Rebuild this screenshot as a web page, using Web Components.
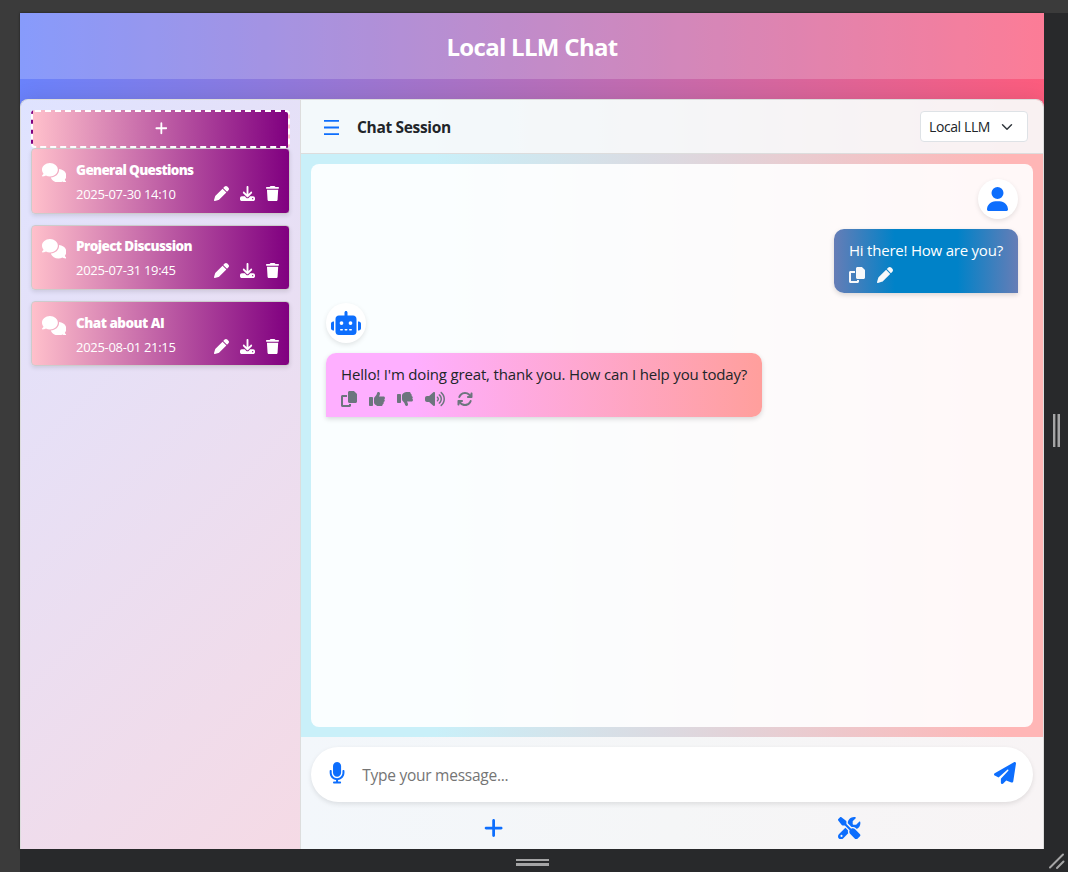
<!DOCTYPE html>
<html lang="en">
<head>
<meta charset="utf-8">
<title>Local LLM Chat</title>
<style>
html,body{margin:0;height:100%;overflow:hidden}
body{background:#3b3b3b;font-family:"Open Sans","Noto Sans",sans-serif;color:#212529}
</style>
</head>
<body>
<device-frame>
  <chat-app>
    <chat-sidebar slot="side">
      <session-card date="2025-07-30 14:10" track="-.67px">General Questions</session-card>
      <session-card date="2025-07-31 19:45" track="-.61px">Project Discussion</session-card>
      <session-card date="2025-08-01 21:15" track="-.52px">Chat about AI</session-card>
    </chat-sidebar>
    <chat-panel slot="main">
      <chat-message who="user" actions="copy pen">Hi there! How are you?</chat-message>
      <chat-message who="bot" actions="copy up down volume sync">Hello! I'm doing great, thank you. How can I help you today?</chat-message>
    </chat-panel>
  </chat-app>
</device-frame>
<script>
const ICONS={
comments:[640,"M208 352c114.9 0 208-78.8 208-176S322.9 0 208 0S0 78.8 0 176c0 38.6 14.7 74.3 39.6 103.4c-3.5 9.4-8.7 17.7-14.2 24.7c-4.8 6.2-9.7 11-13.3 14.3c-1.8 1.6-3.3 2.9-4.3 3.7c-.5 .4-.9 .7-1.1 .8l-.2 .2C1 327.2-1.4 334.4 .8 340.9S9.1 352 16 352c21.8 0 43.8-5.6 62.1-12.5c9.2-3.5 17.8-7.4 25.2-11.4C134.1 343.3 169.8 352 208 352zM448 176c0 112.3-99.1 196.9-216.5 207C255.8 457.4 336.4 512 432 512c38.2 0 73.9-8.7 104.7-23.9c7.5 4 16 7.9 25.2 11.4c18.3 6.9 40.3 12.5 62.1 12.5c6.9 0 13.1-4.5 15.2-11.1c2.1-6.6-.2-13.8-5.8-17.9l-.2-.2c-.2-.2-.6-.4-1.1-.8c-1-.8-2.5-2-4.3-3.7c-3.6-3.3-8.5-8.1-13.3-14.3c-5.5-7-10.7-15.4-14.2-24.7c24.9-29 39.6-64.7 39.6-103.4c0-92.8-84.9-168.9-192.6-175.5c.4 5.1 .6 10.3 .6 15.5z"],
pen:[512,"M362.7 19.3L314.3 67.7 444.3 197.7l48.4-48.4c25-25 25-65.5 0-90.5L453.3 19.3c-25-25-65.5-25-90.5 0zm-71 71L58.6 323.5c-10.4 10.4-18 23.3-22.2 37.4L1 481.2C-1.5 489.7 .8 498.8 7 505s15.3 8.5 23.7 6.1l120.3-35.4c14.1-4.2 27-11.8 37.4-22.2L421.7 220.3 291.7 90.3z"],
download:[512,"M288 32c0-17.7-14.3-32-32-32s-32 14.3-32 32V274.7l-73.4-73.4c-12.5-12.5-32.8-12.5-45.3 0s-12.5 32.8 0 45.3l128 128c12.5 12.5 32.8 12.5 45.3 0l128-128c12.5-12.5 12.5-32.8 0-45.3s-32.8-12.5-45.3 0L288 274.7V32zM64 352c-35.3 0-64 28.7-64 64v32c0 35.3 28.7 64 64 64H448c35.3 0 64-28.7 64-64V416c0-35.3-28.7-64-64-64H346.5l-45.3 45.3c-25 25-65.5 25-90.5 0L165.5 352H64zm368 56a24 24 0 1 1 0 48 24 24 0 1 1 0-48z"],
trash:[448,"M135.2 17.7L128 32H32C14.3 32 0 46.3 0 64S14.3 96 32 96H416c17.7 0 32-14.3 32-32s-14.3-32-32-32H320l-7.2-14.3C307.4 6.8 296.3 0 284.2 0H163.8c-12.1 0-23.2 6.8-28.6 17.7zM416 128H32L53.2 467c1.6 25.3 22.6 45 47.9 45H346.9c25.3 0 46.3-19.7 47.9-45L416 128z"],
plus:[448,"M256 80c0-17.7-14.3-32-32-32s-32 14.3-32 32V224H48c-17.7 0-32 14.3-32 32s14.3 32 32 32H192V432c0 17.7 14.3 32 32 32s32-14.3 32-32V288H400c17.7 0 32-14.3 32-32s-14.3-32-32-32H256V80z"],
user:[448,"M224 256A128 128 0 1 0 224 0a128 128 0 1 0 0 256zm-45.7 48C79.8 304 0 383.8 0 482.3C0 498.7 13.3 512 29.7 512H418.3c16.4 0 29.7-13.3 29.7-29.7C448 383.8 368.2 304 269.7 304H178.3z"],
robot:[640,"M320 0c17.7 0 32 14.3 32 32V96H472c39.8 0 72 32.2 72 72V440c0 39.8-32.2 72-72 72H168c-39.8 0-72-32.2-72-72V168c0-39.8 32.2-72 72-72H288V32c0-17.7 14.3-32 32-32zM208 384c-8.8 0-16 7.2-16 16s7.2 16 16 16h32c8.8 0 16-7.2 16-16s-7.2-16-16-16H208zm96 0c-8.8 0-16 7.2-16 16s7.2 16 16 16h32c8.8 0 16-7.2 16-16s-7.2-16-16-16H304zm96 0c-8.8 0-16 7.2-16 16s7.2 16 16 16h32c8.8 0 16-7.2 16-16s-7.2-16-16-16H400zM264 256a40 40 0 1 0 -80 0 40 40 0 1 0 80 0zm152 40a40 40 0 1 0 0-80 40 40 0 1 0 0 80zM48 224H64V416H48c-26.5 0-48-21.5-48-48V272c0-26.5 21.5-48 48-48zm544 0c26.5 0 48 21.5 48 48v96c0 26.5-21.5 48-48 48H576V224h16z"],
copy:[512,"M272 0H396.1c12.7 0 24.9 5.1 33.9 14.1l67.9 67.9c9 9 14.1 21.2 14.1 33.9V336c0 26.5-21.5 48-48 48H272c-26.5 0-48-21.5-48-48V48c0-26.5 21.5-48 48-48zM48 128H192v64H64V448H256V416h64v48c0 26.5-21.5 48-48 48H48c-26.5 0-48-21.5-48-48V176c0-26.5 21.5-48 48-48z"],
up:[512,"M313.4 32.9c26 5.2 42.9 30.5 37.7 56.5l-2.3 11.4c-5.3 26.7-15.1 52.1-28.8 75.2H464c26.5 0 48 21.5 48 48c0 18.5-10.5 34.6-25.9 42.6C497 275.4 504 288.9 504 304c0 23.4-16.8 42.9-38.9 47.1c4.4 7.3 6.9 15.8 6.9 24.9c0 21.3-13.9 39.4-33.1 45.6c.7 3.3 1.1 6.8 1.1 10.4c0 26.5-21.5 48-48 48H294.5c-19 0-37.5-5.6-53.3-16.1l-38.5-25.7C176 420.4 160 390.4 160 358.3V320 272 247.1c0-29.2 13.3-56.7 36-75l7.4-5.9c26.5-21.2 44.6-51 51.2-84.2l2.3-11.4c5.2-26 30.5-42.9 56.5-37.7zM32 192H96c17.7 0 32 14.3 32 32V448c0 17.7-14.3 32-32 32H32c-17.7 0-32-14.3-32-32V224c0-17.7 14.3-32 32-32z"],
down:[512,"M313.4 479.1c26-5.2 42.9-30.5 37.7-56.5l-2.3-11.4c-5.3-26.7-15.1-52.1-28.8-75.2H464c26.5 0 48-21.5 48-48c0-18.5-10.5-34.6-25.9-42.6C497 236.6 504 223.1 504 208c0-23.4-16.8-42.9-38.9-47.1c4.4-7.3 6.9-15.8 6.9-24.9c0-21.3-13.9-39.4-33.1-45.6c.7-3.3 1.1-6.8 1.1-10.4c0-26.5-21.5-48-48-48H294.5c-19 0-37.5 5.6-53.3 16.1L202.7 73.8C176 91.6 160 121.6 160 153.7V192v48 24.9c0 29.2 13.3 56.7 36 75l7.4 5.9c26.5 21.2 44.6 51 51.2 84.2l2.3 11.4c5.2 26 30.5 42.9 56.5 37.7zM32 384H96c17.7 0 32-14.3 32-32V128c0-17.7-14.3-32-32-32H32C14.3 96 0 110.3 0 128V352c0 17.7 14.3 32 32 32z"],
volume:[640,"M533.6 32.5C598.5 85.2 640 165.8 640 256s-41.5 170.7-106.4 223.5c-10.3 8.4-25.4 6.8-33.8-3.5s-6.8-25.4 3.5-33.8C557.5 398.2 592 331.2 592 256s-34.5-142.2-88.7-186.3c-10.3-8.4-11.8-23.5-3.5-33.8s23.5-11.8 33.8-3.5zM473.1 107c43.2 35.2 70.9 88.9 70.9 149s-27.7 113.8-70.9 149c-10.3 8.4-25.4 6.8-33.8-3.5s-6.8-25.4 3.5-33.8C475.3 341.3 496 301.1 496 256s-20.7-85.3-53.2-111.8c-10.3-8.4-11.8-23.5-3.5-33.8s23.5-11.8 33.8-3.5zm-60.5 74.5C434.1 199.1 448 225.9 448 256s-13.9 56.9-35.4 74.5c-10.3 8.4-25.4 6.8-33.8-3.5s-6.8-25.4 3.5-33.8C393.1 284.4 400 271 400 256s-6.9-28.4-17.7-37.3c-10.3-8.4-11.8-23.5-3.5-33.8s23.5-11.8 33.8-3.5zM301.1 34.8C312.6 40 320 51.4 320 64V448c0 12.6-7.4 24-18.9 29.2s-25 3.1-34.4-5.3L131.8 352H64c-35.3 0-64-28.7-64-64V224c0-35.3 28.7-64 64-64h67.8L266.7 40.1c9.4-8.4 22.9-10.4 34.4-5.3z"],
sync:[512,"M105.1 202.6c7.7-21.8 20.2-42.3 37.8-59.8c62.5-62.5 163.8-62.5 226.3 0L386.3 160H352c-17.7 0-32 14.3-32 32s14.3 32 32 32H463.5c0 0 0 0 0 0h.4c17.7 0 32-14.3 32-32V80c0-17.7-14.3-32-32-32s-32 14.3-32 32v35.2L414.4 97.6c-87.5-87.5-229.3-87.5-316.8 0C73.2 122 55.6 150.7 44.8 181.4c-5.9 16.7 2.9 34.9 19.5 40.8s34.9-2.9 40.8-19.5zM39 289.3c-5 1.5-9.8 4.2-13.7 8.2c-4 4-6.7 8.8-8.1 14c-.3 1.2-.6 2.5-.8 3.8c-.3 1.7-.4 3.4-.4 5.1V432c0 17.7 14.3 32 32 32s32-14.3 32-32V396.9l17.6 17.5 0 0c87.5 87.4 229.3 87.4 316.7 0c24.4-24.4 42.1-53.1 52.9-83.7c5.9-16.7-2.9-34.9-19.5-40.8s-34.9 2.9-40.8 19.5c-7.7 21.8-20.2 42.3-37.8 59.8c-62.5 62.5-163.8 62.5-226.3 0l-.1-.1L125.6 352H160c17.7 0 32-14.3 32-32s-14.3-32-32-32H48.4c-1.6 0-3.2 .1-4.8 .3s-3.1 .5-4.6 1z"],
mic:[384,"M192 0C139 0 96 43 96 96V256c0 53 43 96 96 96s96-43 96-96V96c0-53-43-96-96-96zM64 216c0-13.3-10.7-24-24-24s-24 10.7-24 24v40c0 89.1 66.2 162.7 152 174.4V464H120c-13.3 0-24 10.7-24 24s10.7 24 24 24h72 72c13.3 0 24-10.7 24-24s-10.7-24-24-24H216V430.4c85.8-11.7 152-85.3 152-174.4V216c0-13.3-10.7-24-24-24s-24 10.7-24 24v40c0 70.7-57.3 128-128 128s-128-57.3-128-128V216z"],
plane:[512,"M498.1 5.6c10.1 7 15.4 19.1 13.5 31.2l-64 416c-1.5 9.7-7.4 18.2-16 23s-18.9 5.4-28 1.6L284 427.7l-68.5 74.1c-8.9 9.7-22.9 12.9-35.2 8.1S160 493.2 160 480V396.4c0-4 1.5-7.8 4.2-10.7L331.8 202.8c5.8-6.3 5.6-16-.4-22s-15.7-6.4-22-.7L106 360.8 17.7 316.6C7.1 311.3 .3 300.7 0 288.9s5.9-22.8 16.1-28.7l448-256c10.7-6.1 23.9-5.5 34 1.4z"],
tools:[512,"M78.6 5C69.1-2.4 55.6-1.5 47 7L7 47c-8.5 8.5-9.4 22-2.1 31.6l80 104c4.5 5.9 11.6 9.4 19 9.4h54.1l109 109c-14.7 29-10 65.4 14.3 89.6l112 112c12.5 12.5 32.8 12.5 45.3 0l64-64c12.5-12.5 12.5-32.8 0-45.3l-112-112c-24.2-24.2-60.6-29-89.6-14.3l-109-109V104c0-7.5-3.5-14.5-9.4-19L78.6 5zM19.9 396.1C7.2 408.8 0 426.1 0 444.1C0 481.6 30.4 512 67.9 512c18 0 35.3-7.2 48-19.9L233.7 374.3c-7.8-20.9-9-43.6-3.6-65.1l-61.7-61.7L19.9 396.1zM512 144c0-10.5-1.1-20.7-3.2-30.5c-2.4-11.2-16.1-14.1-24.2-6l-63.9 63.9c-3 3-7.1 4.7-11.3 4.7H352c-8.8 0-16-7.2-16-16V102.6c0-4.2 1.7-8.3 4.7-11.3l63.9-63.9c8.1-8.1 5.2-21.8-6-24.2C388.7 1.1 378.5 0 368 0C288.5 0 224 64.5 224 144l0 .8 85.3 85.3c36-9.1 75.8 .5 104 28.7L429 274.5c49-23 83-72.8 83-130.5zM56 432a24 24 0 1 1 48 0 24 24 0 1 1 -48 0z"]
};
const define=(name,render)=>customElements.define(name,class extends HTMLElement{
  constructor(){super();this.attachShadow({mode:"open"});}
  connectedCallback(){this.shadowRoot.innerHTML=render(this);}
});

define("fa-icon",el=>{
  const [w,d]=ICONS[el.getAttribute("name")],s=+el.getAttribute("size")||16;
  return `<style>:host{display:block;flex:none;line-height:0}svg{display:block}</style>
  <svg width="${s*w/512}" height="${s}" viewBox="0 0 ${w} 512" fill="currentColor"><path d="${d}"/></svg>`;
});

define("device-frame",()=>`<style>
:host{display:grid;grid-template-columns:20px 1024px 24px;grid-template-rows:13px 836px 23px;width:1068px;height:872px}
.app{grid-area:2/2;box-shadow:0 0 2px #1a1a1a;min-width:0}
.right{grid-area:2/3;background:#28292b;box-sizing:border-box;padding:0 0 1px 1px}
.right svg{display:block;margin:401px 0 0 8px}
.bottom{grid-area:3/2/4/4;background:#28292b;display:grid;grid-template-columns:1024px 24px}
.hb{display:flex;flex-direction:column;align-items:center;justify-content:center;gap:2px;padding-top:3px}
.hb i{width:33px;height:2.5px;background:#a5a5a6}
svg{display:block}
</style>
<div class="app"><slot></slot></div>
<div class="right"><svg width="8" height="33" fill="#a5a5a6"><path d="M0 0h2.400v33H0zM4.500 0h2.500v33H4.500z"/></svg></div>
<div class="bottom"><div class="hb"><i></i><i></i></div>
<svg width="24" height="23" viewBox="0 0 24 23" stroke="#a5a5a6" stroke-width="2" stroke-linecap="round"><path d="M6 18.500L19 5.500M13 19L19.500 12.500"/></svg></div>`);

define("chat-app",()=>`<style>
:host{display:flex;flex-direction:column;height:836px;background:linear-gradient(90deg,#6a82fb,#fc5c7d);overflow:hidden}
header{height:66px;background:rgba(255,255,255,.2);display:flex;align-items:center;justify-content:center;margin-bottom:20px;flex:none}
h1{margin:0;font-size:24px;line-height:36px;font-weight:700;color:#fff;padding-top:2px;letter-spacing:-.7px}
.box{flex:1;display:grid;grid-template-columns:280px 742px;border:1px solid #ddd;border-bottom:0;border-radius:8px 8px 0 0;overflow:hidden;box-shadow:0 0 20px rgba(0,0,0,.1);background:#f8f9fa;background-clip:padding-box}
</style>
<header><h1>Local LLM Chat</h1></header>
<div class="box"><slot name="side"></slot><slot name="main"></slot></div>`);

define("chat-sidebar",()=>`<style>
:host{display:flex;flex-direction:column;box-sizing:border-box;border-right:1px solid #ddd;padding:10px;background:linear-gradient(135deg,#dfe3ff,#f5dae5)}
.new{box-sizing:border-box;width:259px;height:38.300px;flex:none;border:2px dashed #fff;border-radius:4px;background-image:linear-gradient(90deg,#ffc0cb,#800080);color:#fff;display:flex;align-items:center;justify-content:center;padding:0 0 2px 1px}
.list{display:flex;flex-direction:column;gap:11px}
</style>
<div class="new"><fa-icon name="plus" size="14.500"></fa-icon></div>
<div class="list"><slot></slot></div>`);

define("session-card",el=>`<style>
:host{box-sizing:border-box;display:flex;width:259px;height:65.400px;border:1px solid #ccc;border-radius:4px;background:linear-gradient(90deg,#ffc0cb,#800080);color:#fff;padding:8.500px 10px 0 10px;box-shadow:0 2px 4px rgba(0,0,0,.1)}
fa-icon.c{margin-top:5px;margin-right:9.700px}
.body{flex:1;min-width:0}
.t{font-size:13.500px;font-weight:800;line-height:24px;letter-spacing:${el.getAttribute("track")};white-space:nowrap}
.r{display:flex;align-items:center;height:24px;gap:11px}
.d{flex:1;font-size:13px;letter-spacing:-.3px;line-height:24px;white-space:nowrap}
</style>
<fa-icon class="c" name="comments" size="19.500"></fa-icon>
<div class="body"><div class="t"><slot></slot></div>
<div class="r"><span class="d">${el.getAttribute("date")}</span><fa-icon name="pen" size="15"></fa-icon><fa-icon name="download" size="15"></fa-icon><fa-icon name="trash" size="15"></fa-icon></div></div>`);

define("chat-panel",()=>`<style>
:host{display:flex;flex-direction:column;min-width:0;background:linear-gradient(90deg,#c9f0f9 18%,#dcd9e0 50%,#ffb6b6 95%)}
.top{box-sizing:border-box;height:54px;flex:none;border-bottom:1px solid #ddd;background:rgba(248,249,250,.88);display:flex;align-items:center;padding:0 15px 0 23px}
.burger{display:block;margin:2px 18px 0 0}
h2{margin:0;flex:1;font-size:15.500px;font-weight:700;line-height:24px;letter-spacing:-.33px}
.sel{box-sizing:border-box;width:108px;height:31px;border:1px solid #dee2e6;border-radius:4px;background:#fff;display:flex;align-items:center;justify-content:space-between;padding:0 14px 0 8px;font-size:14px;letter-spacing:-.4px}
.mid{flex:1;padding:10px;display:flex}
.chat{flex:1;border-radius:8px;background:rgba(255,255,255,.9);padding:15px}
.foot{box-sizing:border-box;height:112px;flex:none;padding:10px;background:linear-gradient(90deg,#f3f7fb,#f5f6f7 50%,#f8f4f5)}
.in{box-sizing:border-box;height:55px;border-radius:28px;background:#fff;box-shadow:0 2px 5px rgba(0,0,0,.1);display:flex;align-items:center;color:#0d6efd;padding:0 17px 3px 18px}
.in span{flex:1;color:#757575;font-size:15.500px;letter-spacing:-.25px;padding:3px 0 0 17px}
.btns{display:grid;grid-template-columns:356px 356px;justify-content:center;justify-items:center;align-items:center;height:52px;padding-right:1px;color:#0d6efd}
</style>
<div class="top"><svg class="burger" width="15" height="17" viewBox="0 0 15 17" fill="#0d6efd"><path d="M0 1h15v1.800H0zM0 7.600h15v1.800H0zM0 14.200h15v1.800H0z"/></svg><h2>Chat Session</h2>
<div class="sel"><span>Local LLM</span><svg width="12" height="12" viewBox="0 0 16 16" fill="none" stroke="#343a40" stroke-width="2" stroke-linecap="round" stroke-linejoin="round"><path d="m2 5 6 6 6-6"/></svg></div></div>
<div class="mid"><div class="chat"><slot></slot></div></div>
<div class="foot"><div class="in"><fa-icon name="mic" size="21.500"></fa-icon><span>Type your message...</span><fa-icon name="plane" size="22"></fa-icon></div>
<div class="btns"><fa-icon name="plus" size="22"></fa-icon><fa-icon name="tools" size="22.400"></fa-icon></div></div>`);

define("chat-message",el=>{
  const me=el.getAttribute("who")==="user";
  return `<style>
:host{display:flex;flex-direction:column;align-items:${me?"flex-end":"flex-start"};gap:10px;margin-bottom:10px}
.av{box-sizing:border-box;width:40px;height:40px;border-radius:50%;background:#fff;color:#0d6efd;display:flex;align-items:center;justify-content:center;box-shadow:0 2px 5px rgba(0,0,0,.1);padding-right:${me?1:0}px}
.b{box-sizing:border-box;width:${me?184:436}px;height:64px;padding:9px 15px 0;border-radius:${me?"10px 10px 0 10px":"10px 10px 10px 0"};box-shadow:0 2px 5px rgba(0,0,0,.15);
background:${me?"linear-gradient(90deg,#667db6,#0082c8 33%,#0082c8 67%,#667db6)":"linear-gradient(90deg,#feafff 20%,#ff9f9c)"};color:${me?"#fff":"#212529"}}
.t{font-size:15px;line-height:24px;white-space:nowrap;letter-spacing:${me?"-.22px":"-.17px"}}
.a{display:flex;gap:12px;margin-top:5px;color:${me?"#f8f9fa":"#6c757d"}}
</style>
<div class="av"><fa-icon name="${me?"user":"robot"}" size="24"></fa-icon></div>
<div class="b"><div class="t"><slot></slot></div><div class="a">${el.getAttribute("actions").split(" ").map(n=>`<fa-icon name="${n}" size="16"></fa-icon>`).join("")}</div></div>`;
});
</script>
</body>
</html>
